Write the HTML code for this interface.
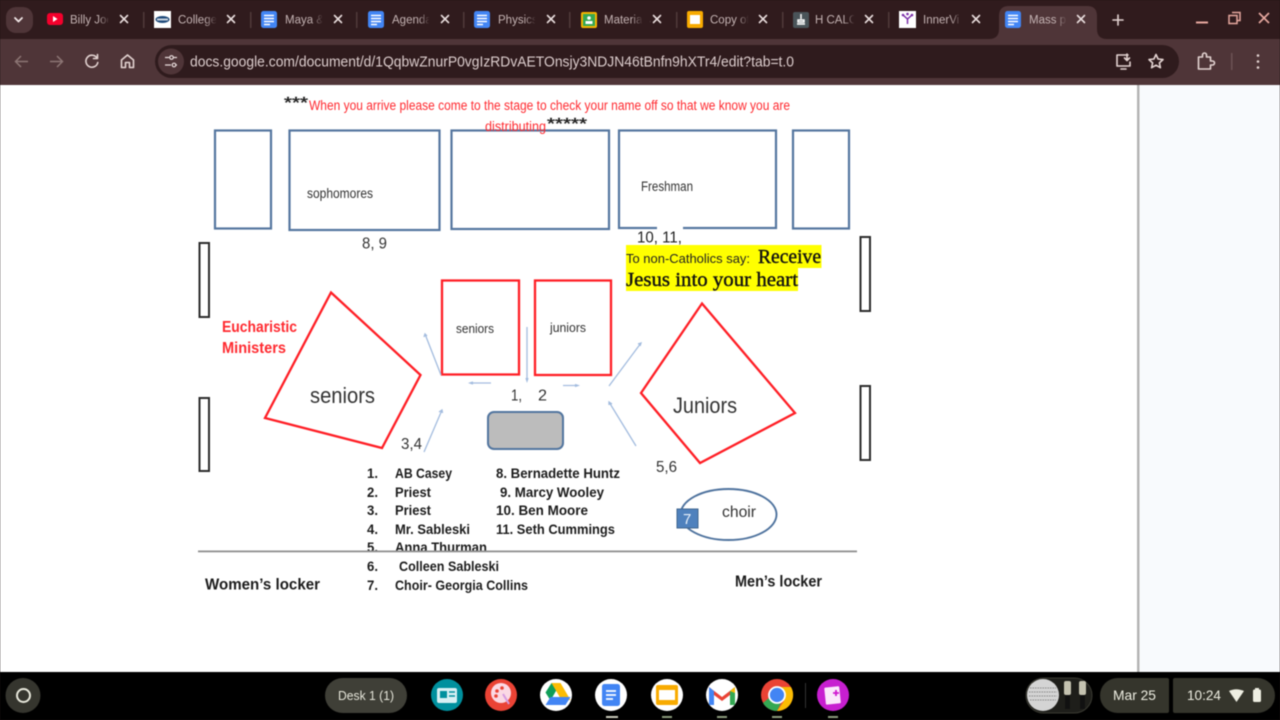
<!DOCTYPE html>
<html><head><meta charset="utf-8"><title>Mass</title>
<style>
html,body{margin:0;padding:0;width:1280px;height:720px;overflow:hidden;background:#1c1214}
svg{display:block;position:absolute;left:0;top:0;filter:blur(.45px)}
text{font-family:"Liberation Sans",sans-serif}
.tab{font-size:11.5px;fill:#c4b3b3}
.d{fill:#333}
.b{fill:#1c1c1c;font-size:13.5px;font-weight:bold}
.s{font-family:"Liberation Serif",serif;fill:#111;stroke:#111;stroke-width:.4px;font-size:20px}
.ic{fill:none;stroke:#e3d3d1;stroke-width:1.6;stroke-linecap:round;stroke-linejoin:round}
.cl{fill:none;stroke:#e8dcdc;stroke-width:1.6;stroke-linecap:round}
</style></head><body>
<svg width="1280" height="720" viewBox="0 0 1280 720" xmlns="http://www.w3.org/2000/svg">
<defs>
<linearGradient id="f"><stop offset="0" stop-color="#301b1d" stop-opacity="0"/><stop offset="1" stop-color="#301b1d"/></linearGradient>
<linearGradient id="fa"><stop offset="0" stop-color="#4f3538" stop-opacity="0"/><stop offset="1" stop-color="#4f3538"/></linearGradient>
<symbol id="docs" viewBox="0 0 16 17"><rect width="16" height="17" rx="2.5" fill="#4285f4"/><path d="M3 4.5h10M3 7.5h10M3 10.5h10M3 13.5h6" stroke="#fff" stroke-width="1.5"/></symbol>
<g id="x"><path class="cl" d="M-3.500-3.500L3.500 3.500M3.500-3.500L-3.500 3.500"/></g>
</defs>

<!-- chrome -->
<rect width="1280" height="40" fill="#301b1d"/>
<rect y="39" width="1280" height="46" fill="#4f3538"/>
<rect x="6" y="7" width="27" height="26" rx="10" fill="#4f3538"/>
<path d="M15 18l3.500 3.500L22 18" fill="none" stroke="#f0e6e6" stroke-width="1.800" stroke-linecap="round" stroke-linejoin="round"/>
<path d="M989 39q10 0 10-10V16q0-10 10-10h78q10 0 10 10v13q0 10 10 10z" fill="#4f3538"/>

<!-- separators -->
<g fill="#4f3a3a">
<rect x="143" y="12" width="1.500" height="16"/><rect x="250" y="12" width="1.500" height="16"/><rect x="356" y="12" width="1.500" height="16"/><rect x="463" y="12" width="1.500" height="16"/><rect x="569" y="12" width="1.500" height="16"/><rect x="676" y="12" width="1.500" height="16"/><rect x="782" y="12" width="1.500" height="16"/><rect x="888" y="12" width="1.500" height="16"/>
</g>

<!-- favicons -->
<rect x="47" y="13" width="16" height="12" rx="3" fill="#f5002c"/><path d="M53 16l4.500 3-4.500 3z" fill="#fff"/>
<rect x="154" y="11" width="17" height="17" fill="#fff"/><ellipse cx="162.500" cy="19.500" rx="7" ry="3.500" fill="#1f4a7a"/><rect x="157" y="18.500" width="11" height="2" fill="#c8d4e0"/>
<use href="#docs" x="261" y="11" width="16" height="17"/>
<use href="#docs" x="368" y="11" width="16" height="17"/>
<use href="#docs" x="474" y="11" width="16" height="17"/>
<rect x="581" y="12" width="16" height="16" rx="2" fill="#f4b400"/><rect x="583" y="14" width="12" height="12" fill="#34a853"/><circle cx="589" cy="18" r="1.800" fill="#fff"/><rect x="585.500" y="21" width="7" height="3" fill="#fff"/>
<rect x="687" y="11" width="16" height="17" rx="2" fill="#f8ab00"/><rect x="690" y="15" width="10" height="9" fill="#fff"/>
<rect x="793" y="12" width="16" height="16" rx="2" fill="#4a5459"/><path d="M801 14v5M798 20h6v2h-6z M797 24h8" stroke="#fff" stroke-width="1.500" fill="none"/>
<rect x="899" y="11" width="17" height="17" fill="#fff"/><path d="M903 15l4.500 4 4.500-4M907.500 19v5" stroke="#7b2fa8" stroke-width="1.500" fill="none"/><circle cx="903" cy="15" r="1.300" fill="#7b2fa8"/><circle cx="912" cy="15" r="1.300" fill="#7b2fa8"/><circle cx="907.500" cy="14" r="1.300" fill="#7b2fa8"/>
<use href="#docs" x="1005" y="11" width="16" height="17"/>

<!-- tab titles -->
<text class="tab" x="70" y="23.500">Billy Joel</text><rect x="98" y="10" width="12" height="20" fill="url(#f)"/><rect x="108" y="10" width="8" height="20" fill="#301b1d"/>
<text class="tab" x="178" y="23.500">College</text><rect x="205" y="10" width="12" height="20" fill="url(#f)"/><rect x="216" y="10" width="8" height="20" fill="#301b1d"/>
<text class="tab" x="285" y="23.500">Maya &amp;</text><rect x="311" y="10" width="12" height="20" fill="url(#f)"/><rect x="322" y="10" width="8" height="20" fill="#301b1d"/>
<text class="tab" x="392" y="23.500">Agenda</text><rect x="418" y="10" width="12" height="20" fill="url(#f)"/><rect x="429" y="10" width="8" height="20" fill="#301b1d"/>
<text class="tab" x="498" y="23.500">Physics</text><rect x="524" y="10" width="12" height="20" fill="url(#f)"/><rect x="535" y="10" width="8" height="20" fill="#301b1d"/>
<text class="tab" x="604" y="23.500">Materials</text><rect x="631" y="10" width="12" height="20" fill="url(#f)"/><rect x="642" y="10" width="8" height="20" fill="#301b1d"/>
<text class="tab" x="710" y="23.500">Copy of</text><rect x="737" y="10" width="12" height="20" fill="url(#f)"/><rect x="748" y="10" width="8" height="20" fill="#301b1d"/>
<text class="tab" x="815" y="23.500">H CALC</text><rect x="843" y="10" width="12" height="20" fill="url(#f)"/><rect x="854" y="10" width="8" height="20" fill="#301b1d"/>
<text class="tab" x="923" y="23.500">InnerVi</text><rect x="950" y="10" width="12" height="20" fill="url(#f)"/><rect x="961" y="10" width="8" height="20" fill="#301b1d"/>
<text class="tab" x="1029" y="23.500">Mass p</text><rect x="1055" y="10" width="12" height="20" fill="url(#fa)"/><rect x="1066" y="10" width="8" height="20" fill="#4f3538"/>

<!-- close -->
<use href="#x" x="124" y="19"/><use href="#x" x="231" y="19"/><use href="#x" x="338" y="19"/><use href="#x" x="445" y="19"/><use href="#x" x="551" y="19"/><use href="#x" x="657" y="19"/><use href="#x" x="763" y="19"/><use href="#x" x="869" y="19"/><use href="#x" x="976" y="19"/><use href="#x" x="1081" y="19"/>
<path class="ic" d="M1118 15v10M1113 20h10"/>

<!-- window controls -->
<path d="M1196 22.500h12" stroke="#e6a79e" stroke-width="2"/>
<path d="M1232 12.500h8v8h-3M1229 15.500h8v8h-8z" fill="none" stroke="#e6a79e" stroke-width="1.500"/>
<path d="M1259 13l10 10M1269 13l-10 10" stroke="#e6a79e" stroke-width="1.700"/>

<!-- toolbar -->
<rect x="155" y="45" width="1024" height="33" rx="16.500" fill="#2f1b1d"/>
<circle cx="171" cy="61.500" r="13" fill="#4f3538"/>
<path d="M165 57.500h4M173 57.500h4M165 65h6M176 65h1" stroke="#e8dcdc" stroke-width="1.300"/><circle cx="171.500" cy="57.500" r="1.800" fill="none" stroke="#e8dcdc" stroke-width="1.200"/><circle cx="174" cy="65" r="1.800" fill="none" stroke="#e8dcdc" stroke-width="1.200"/>
<path d="M28 61.500H16M21 56l-5.500 5.500L21 67" fill="none" stroke="#8c7574" stroke-width="1.500"/>
<path d="M50 61.500h12M57 56l5.500 5.500L57 67" fill="none" stroke="#8c7574" stroke-width="1.500"/>
<path class="ic" d="M97 58a6 6 0 1 0 .8 4.500M97.500 54.500v4h-4"/>
<path class="ic" d="M121.500 60l6-5 6 5v7.500h-4v-5h-4v5h-4z"/>
<text x="190" y="66.500" font-size="14.300" fill="#dccdcd" textLength="604" lengthAdjust="spacingAndGlyphs">docs.google.com/document/d/1QqbwZnurP0vgIzRDvAETOnsjy3NDJN46tBnfn9hXTr4/edit?tab=t.0</text>
<path class="ic" d="M1128 55h-11v11h13v-4M1121 69h5M1127 54v6M1124.500 58l2.500 2.500 2.500-2.500"/>
<path class="ic" d="M1156 54.500l2.100 4.500 4.900.6-3.600 3.300 1 4.800-4.400-2.500-4.400 2.500 1-4.800-3.600-3.300 4.900-.6z"/>
<path class="ic" d="M1198.500 57h4v-2a2 2 0 0 1 4 0v2h4v4h2a2 2 0 0 1 0 4h-2v4h-12z"/>
<rect x="1231" y="53" width="1.500" height="17" fill="#6c5254"/>
<circle cx="1258" cy="55.500" r="1.300" fill="#e3d3d1"/><circle cx="1258" cy="61.500" r="1.300" fill="#e3d3d1"/><circle cx="1258" cy="67.500" r="1.300" fill="#e3d3d1"/>

<!-- page -->
<rect y="85" width="1280" height="587" fill="#fff"/>
<rect x="1140" y="85" width="140" height="587" fill="#f8fafd"/>
<rect x="1137" y="85" width="2.500" height="587" fill="#b4b4b4"/>

<!-- blue boxes -->
<g fill="none" stroke="#55769f" stroke-width="2.200">
<rect x="215" y="130.500" width="56" height="98"/>
<rect x="289.500" y="130.500" width="150" height="99.500"/>
<rect x="451.500" y="130.500" width="157.500" height="98.500"/>
<rect x="619" y="130.500" width="157" height="97.500"/>
<rect x="793" y="130.500" width="56" height="98"/>
</g>
<rect x="657" y="226" width="26" height="4" fill="#fff"/>
<!-- black boxes -->
<g fill="none" stroke="#2c2c2c" stroke-width="2">
<rect x="199.500" y="243" width="9.500" height="74"/>
<rect x="199.500" y="398" width="9.500" height="73"/>
<rect x="860.500" y="237" width="9.500" height="74"/>
<rect x="860.500" y="386" width="9.500" height="74"/>
</g>
<!-- red -->
<g fill="none" stroke="#ff1f26" stroke-width="2.300">
<rect x="442" y="280.500" width="77" height="94"/>
<rect x="535" y="280.500" width="76" height="94.500"/>
<path d="M331 292.500L420.500 375 382 448 265 418z"/>
<path d="M702 303.500L795 413 700 463 641 393z"/>
</g>
<!-- arrows -->
<g fill="none" stroke="#a3bcdf" stroke-width="1.300">
<path d="M441 375L425 334M424 337l1-3 2 2"/>
<path d="M527 327V381M526 378l1 3 1-3"/>
<path d="M491 383H470M473 382l-3 1 3 1"/>
<path d="M563 385.500H578M575 384.500l3 1-3 1"/>
<path d="M609 386L641 343M638 344l3-1-1 3"/>
<path d="M636 446L609 402M609 405l0-3 3 2"/>
<path d="M424 452L442 410M439 412l3-2 .5 3"/>
</g>
<rect x="488" y="412" width="75" height="37" rx="6" fill="#bcbcbc" stroke="#52759f" stroke-width="2"/>
<ellipse cx="728.500" cy="514.500" rx="48" ry="25.500" fill="#fff" stroke="#4f739e" stroke-width="1.900"/>
<rect x="677" y="509" width="21" height="19" fill="#4f81bd" stroke="#41658f" stroke-width="1"/>

<!-- highlight -->
<rect x="626" y="245" width="195.500" height="23" fill="#ffff00"/>
<rect x="626" y="268" width="172" height="23" fill="#ffff00"/>

<!-- text -->
<text x="284" y="108" font-size="16" fill="#222" stroke="#222" stroke-width=".4" textLength="24" lengthAdjust="spacingAndGlyphs">***</text>
<text x="309" y="110" font-size="13.500" fill="#ff2a30" textLength="481" lengthAdjust="spacingAndGlyphs">When you arrive please come to the stage to check your name off so that we know you are</text>
<text x="485" y="131" font-size="13.500" fill="#ff2a30" textLength="61" lengthAdjust="spacingAndGlyphs">distributing</text>
<text x="547" y="129" font-size="16" fill="#222" stroke="#222" stroke-width=".4" textLength="40" lengthAdjust="spacingAndGlyphs">*****</text>
<text class="d" x="307" y="198" font-size="13.500" textLength="66" lengthAdjust="spacingAndGlyphs">sophomores</text>
<text class="d" x="362" y="248.500" font-size="16" textLength="25" lengthAdjust="spacingAndGlyphs">8, 9</text>
<text class="d" x="641" y="191" font-size="13.500" textLength="52" lengthAdjust="spacingAndGlyphs">Freshman</text>
<text x="637" y="242.500" font-size="16" fill="#222" textLength="45" lengthAdjust="spacingAndGlyphs">10, 11,</text>
<text x="626" y="263" font-size="13" fill="#222" textLength="124" lengthAdjust="spacingAndGlyphs">To non-Catholics say:</text>
<text class="s" x="758" y="263" textLength="63" lengthAdjust="spacingAndGlyphs">Receive</text>
<text class="s" x="626" y="286" textLength="172" lengthAdjust="spacingAndGlyphs">Jesus into your heart</text>

<text x="222" y="332" font-size="15.500" font-weight="bold" fill="#ff2a30" textLength="75" lengthAdjust="spacingAndGlyphs">Eucharistic</text>
<text x="222" y="353" font-size="15.500" font-weight="bold" fill="#ff2a30" textLength="64" lengthAdjust="spacingAndGlyphs">Ministers</text>
<text class="d" x="310" y="403" font-size="22" textLength="65" lengthAdjust="spacingAndGlyphs">seniors</text>
<text class="d" x="456" y="333" font-size="12.500" textLength="38" lengthAdjust="spacingAndGlyphs">seniors</text>
<text class="d" x="550" y="332" font-size="12.500" textLength="36" lengthAdjust="spacingAndGlyphs">juniors</text>
<text class="d" x="511" y="400.500" font-size="16" textLength="11" lengthAdjust="spacingAndGlyphs">1,</text>
<text class="d" x="538" y="400.500" font-size="16" textLength="9" lengthAdjust="spacingAndGlyphs">2</text>
<text class="d" x="401" y="449" font-size="16" textLength="21" lengthAdjust="spacingAndGlyphs">3,4</text>
<text class="d" x="673" y="413" font-size="22" textLength="64" lengthAdjust="spacingAndGlyphs">Juniors</text>
<text class="d" x="656" y="472" font-size="16" textLength="21" lengthAdjust="spacingAndGlyphs">5,6</text>
<text class="d" x="722" y="517" font-size="16" textLength="34" lengthAdjust="spacingAndGlyphs">choir</text>
<text x="683" y="524" font-size="15" fill="#e8f0fa">7</text>

<text class="b" x="367" y="478" textLength="11" lengthAdjust="spacingAndGlyphs">1.</text><text class="b" x="395" y="478" textLength="57" lengthAdjust="spacingAndGlyphs">AB Casey</text>
<text class="b" x="367" y="497" textLength="11" lengthAdjust="spacingAndGlyphs">2.</text><text class="b" x="395" y="497" textLength="36" lengthAdjust="spacingAndGlyphs">Priest</text>
<text class="b" x="367" y="515" textLength="11" lengthAdjust="spacingAndGlyphs">3.</text><text class="b" x="395" y="515" textLength="36" lengthAdjust="spacingAndGlyphs">Priest</text>
<text class="b" x="367" y="534" textLength="11" lengthAdjust="spacingAndGlyphs">4.</text><text class="b" x="395" y="534" textLength="75" lengthAdjust="spacingAndGlyphs">Mr. Sableski</text>
<text class="b" x="367" y="552" textLength="11" lengthAdjust="spacingAndGlyphs">5.</text><text class="b" x="395" y="552" textLength="92" lengthAdjust="spacingAndGlyphs">Anna Thurman</text>
<text class="b" x="367" y="571" textLength="11" lengthAdjust="spacingAndGlyphs">6.</text><text class="b" x="399" y="571" textLength="100" lengthAdjust="spacingAndGlyphs">Colleen Sableski</text>
<text class="b" x="367" y="590" textLength="11" lengthAdjust="spacingAndGlyphs">7.</text><text class="b" x="395" y="590" textLength="133" lengthAdjust="spacingAndGlyphs">Choir- Georgia Collins</text>
<text class="b" x="496" y="478" textLength="124" lengthAdjust="spacingAndGlyphs">8. Bernadette Huntz</text>
<text class="b" x="500" y="497" textLength="104" lengthAdjust="spacingAndGlyphs">9. Marcy Wooley</text>
<text class="b" x="496" y="515" textLength="92" lengthAdjust="spacingAndGlyphs">10. Ben Moore</text>
<text class="b" x="496" y="534" textLength="119" lengthAdjust="spacingAndGlyphs">11. Seth Cummings</text>
<text class="b" x="205" y="589.500" style="font-size:16px" textLength="115" lengthAdjust="spacingAndGlyphs">Women’s  locker</text>
<text class="b" x="735" y="586.500" style="font-size:16px" textLength="87" lengthAdjust="spacingAndGlyphs">Men’s locker</text>
<rect x="198" y="550.500" width="659" height="1.800" fill="#8f8f8f"/>

<!-- shelf -->
<rect y="672" width="1280" height="48" fill="#000"/>
<circle cx="23" cy="695.500" r="17.500" fill="#35352e"/>
<circle cx="23.500" cy="695.500" r="6.500" fill="none" stroke="#e8e8dc" stroke-width="2"/>
<rect x="325" y="678" width="82" height="35" rx="17.500" fill="#3f3f37"/>
<text x="338" y="700" font-size="13" fill="#e6e6da" textLength="56" lengthAdjust="spacingAndGlyphs">Desk 1 (1)</text>

<circle cx="447" cy="695" r="16" fill="#00909e"/><rect x="437" y="688" width="20" height="15" rx="2" fill="#d8f0f4"/><rect x="440" y="691" width="7" height="7" fill="#00909e"/><path d="M449 692h6M449 696h6" stroke="#00909e" stroke-width="1.500"/>
<circle cx="501" cy="695" r="16" fill="#ea4335"/><circle cx="501" cy="693" r="10" fill="#fbd9e4"/><circle cx="497" cy="691" r="1.800" fill="#ea4335"/><circle cx="502" cy="688" r="1.800" fill="#ea4335"/><circle cx="496" cy="696" r="1.800" fill="#ea4335"/><path d="M503 694l6 10" stroke="#d59be0" stroke-width="2"/>
<circle cx="556" cy="695" r="16" fill="#fff"/><path d="M551.500 683h9l-10 17.500-5-8z" fill="#0f9d58"/><path d="M551.500 683h9l10 17h-9z" fill="#fbbc04"/><path d="M545.500 705l5-8h20l-5 8z" fill="#4285f4"/>
<circle cx="611" cy="695" r="16" fill="#fff"/><rect x="602" y="684" width="18" height="22" rx="2.500" fill="#4285f4"/><path d="M606 691h10M606 695h10M606 699h7" stroke="#fff" stroke-width="1.700"/>
<circle cx="667" cy="695" r="16" fill="#fff"/><rect x="656" y="685" width="22" height="20" rx="2" fill="#f8ab00"/><rect x="659" y="690" width="16" height="10" fill="#fff"/>
<circle cx="722" cy="695" r="16" fill="#fff"/><path d="M709 705v-18l13 10 13-10v18h-5v-10l-8 6-8-6v10z" fill="#ea4335"/><path d="M709 705v-18l5 4v14z" fill="#4285f4"/><path d="M735 705v-18l-5 4v14z" fill="#34a853"/><path d="M730 691l5-4v6z" fill="#fbbc04"/>
<circle cx="777" cy="695" r="16" fill="#ea4335"/><path d="M763 703a16 16 0 0 0 14 8l7-14h-14z" fill="#34a853"/><path d="M777 711a16 16 0 0 0 14-24h-14l7 14z" fill="#fbbc04"/><circle cx="777" cy="695" r="8" fill="#4285f4" stroke="#fff" stroke-width="1.800"/>
<rect x="805" y="683" width="1" height="25" fill="#333"/>
<circle cx="833" cy="695" r="16" fill="#c71fd0"/><rect x="825" y="687" width="15" height="17" rx="1" fill="#fbe8fb" transform="rotate(-6 832 695)"/><path d="M836 690v6M833 693h6" stroke="#d018d0" stroke-width="1.800"/>
<g fill="#c9c9ba"><rect x="606" y="716" width="12" height="2"/></g>
<g fill="#8c9a7c"><rect x="662" y="716" width="10" height="2"/><rect x="717" y="716" width="10" height="2"/><rect x="772" y="716" width="10" height="2"/><rect x="828" y="716" width="10" height="2"/></g>

<rect x="1026" y="678" width="66" height="35" rx="17.500" fill="#1e1e1a" stroke="#3a3a32" stroke-width="1"/>
<circle cx="1043" cy="695" r="16" fill="#d4d4d4"/><path d="M1030 688h26M1029 692h28M1029 696h28M1030 700h26" stroke="#888" stroke-width="1" stroke-dasharray="1.500 1"/>
<rect x="1064" y="681" width="7" height="14" rx="2" fill="#c4c2b0"/><rect x="1065" y="695" width="5" height="14" fill="#111"/>
<rect x="1079" y="681" width="7" height="14" rx="2" fill="#c4c2b0"/><rect x="1080" y="695" width="5" height="14" fill="#111"/>
<path d="M1117.500 678h49.500a2 2 0 0 1 2 2v31a2 2 0 0 1-2 2h-49.500a17.500 17.500 0 0 1 0-35z" fill="#35352c"/>
<text x="1113" y="700" font-size="14" fill="#eeeee2" textLength="43" lengthAdjust="spacingAndGlyphs">Mar 25</text>
<path d="M1175 678h82.500a17.500 17.500 0 0 1 0 35h-82.500a2 2 0 0 1-2-2v-31a2 2 0 0 1 2-2z" fill="#35352c"/>
<text x="1187" y="700" font-size="14" fill="#eeeee2" textLength="34" lengthAdjust="spacingAndGlyphs">10:24</text>
<path d="M1229 691q7-3.500 15 0l-7.500 11z" fill="#eeeee2"/>
<rect x="1253" y="689.500" width="8" height="12.500" rx="1.500" fill="#eeeee2"/><rect x="1255" y="688" width="4" height="2" fill="#eeeee2"/>
</svg>
</body></html>
